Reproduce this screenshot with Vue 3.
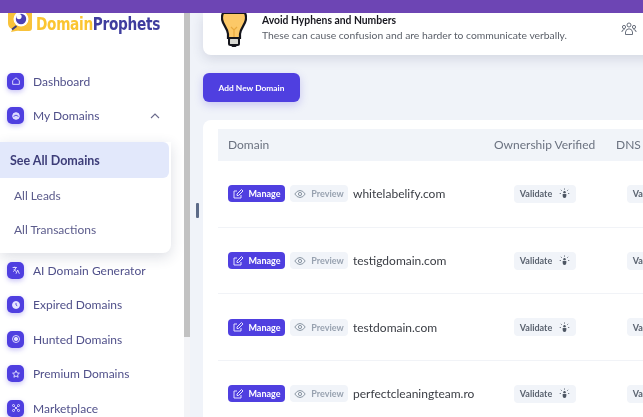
<script setup>
const topItems = [
  { label: 'Dashboard', icon: 'home' },
  { label: 'My Domains', icon: 'globe', open: true }
]

const subItems = [
  { label: 'See All Domains', active: true },
  { label: 'All Leads' },
  { label: 'All Transactions' }
]

const bottomItems = [
  { label: 'AI Domain Generator', icon: 'translate' },
  { label: 'Expired Domains', icon: 'clock' },
  { label: 'Hunted Domains', icon: 'target' },
  { label: 'Premium Domains', icon: 'star' },
  { label: 'Marketplace', icon: 'market' }
]

const domains = ['whitelabelify.com', 'testigdomain.com', 'testdomain.com', 'perfectcleaningteam.ro']
</script>

<template>
  <div class="page">
    <div class="topbar"></div>
    <div class="body">
      <aside class="sidebar">
        <div class="logo">
          <svg class="logo__mark" viewBox="0 0 24 19" width="24" height="19">
            <path d="M0 0h24v15q0 3-3 3H12q-2-.5-4 0L3 19l1.500-3Q0 15 0 10z" fill="#f8c23a" />
            <circle cx="13" cy="6" r="7.500" fill="#fff" />
            <circle cx="13" cy="6" r="5.200" fill="#4a3fb5" />
            <circle cx="11" cy="3.600" r="2.600" fill="#fff" />
            <path d="M4 16.500 8.500 13" stroke="#3c3a78" stroke-width="2" />
          </svg>
          <span class="logo__text"><span class="logo__a">Domain</span><span class="logo__b">Prophets</span></span>
        </div>

        <nav class="nav">
          <a v-for="item in topItems" :key="item.label" class="nav__item">
            <span class="nav__icon">
              <svg viewBox="0 0 12 12" width="10" height="10" fill="none" stroke="#e6e4ff" stroke-width="1.100">
                <path v-if="item.icon === 'home'" d="M2 5.500 6 2.200l4 3.300V10H2z" />
                <template v-else>
                  <circle cx="6" cy="6" r="4" fill="#d9d6ff" />
                  <path d="M3 6.500 6 5l3 1.500" stroke="#4f3fe0" />
                </template>
              </svg>
            </span>
            <span class="nav__label">{{ item.label }}</span>
            <svg v-if="item.open" class="nav__chevron" viewBox="0 0 10 6" width="10" height="6" fill="none" stroke="#6b6b8c" stroke-width="1.100">
              <path d="M1 5 5 1l4 4" />
            </svg>
          </a>
        </nav>

        <ul class="submenu">
          <li v-for="sub in subItems" :key="sub.label" class="submenu__item" :class="{ active: sub.active }">
            {{ sub.label }}
          </li>
        </ul>

        <nav class="nav">
          <a v-for="item in bottomItems" :key="item.label" class="nav__item">
            <span class="nav__icon">
              <svg viewBox="0 0 12 12" width="10" height="10" fill="none" stroke="#e6e4ff" stroke-width="1.100">
                <g v-if="item.icon === 'translate'">
                  <path d="M2 3h5M4.500 2v1M6 3Q5 6.500 2.500 8M3.500 5q1 2 3 3" />
                  <path d="M6 10.500 8 6l2 4.500" />
                </g>
                <g v-else-if="item.icon === 'clock'">
                  <circle cx="6" cy="6" r="4.200" fill="#e6e4ff" />
                  <path d="M6 3.500V6l1.500 1" stroke="#4f3fe0" />
                </g>
                <g v-else-if="item.icon === 'target'">
                  <circle cx="6" cy="6" r="4.200" />
                  <circle cx="6" cy="6" r="2" fill="#e6e4ff" />
                </g>
                <path v-else-if="item.icon === 'star'" d="m6 2 1.200 2.700 2.900.3-2.200 2 .6 2.900L6 8.400 3.500 9.900l.6-2.900-2.200-2 2.900-.3z" />
                <g v-else>
                  <circle cx="3" cy="3" r="1.200" />
                  <circle cx="9" cy="3" r="1.200" />
                  <circle cx="3" cy="9" r="1.200" />
                  <circle cx="9" cy="9" r="1.200" />
                  <path d="m4 4 4 4M8 4 4 8" />
                </g>
              </svg>
            </span>
            <span class="nav__label">{{ item.label }}</span>
          </a>
        </nav>
      </aside>

      <div class="scrolltrack"><div class="scrolltrack__thumb"></div></div>

      <main class="main">
        <span class="handle"></span>

        <section class="tip">
          <svg class="tip__bulb" viewBox="0 0 26 34" width="26" height="34">
            <path d="M2 0h22q1.500 3 .8 7c-.8 5-5.300 8-5.800 14v4H7v-4C6.500 15 2 12 1.200 7Q.500 3 2 0z" fill="#fcc867" stroke="#15151c" stroke-width="2.200" />
            <path d="M10 14l3 3 3-3M13 17v7" stroke="#e9a93d" stroke-width="1.200" fill="none" />
            <rect x="8" y="25" width="10" height="7" rx="1.500" fill="#d8d8d2" stroke="#15151c" stroke-width="2" />
            <rect x="10.500" y="31" width="5" height="3" rx="1" fill="#15151c" />
          </svg>
          <div class="tip__text">
            <strong class="tip__title">Avoid Hyphens and Numbers</strong>
            <p class="tip__desc">These can cause confusion and are harder to communicate verbally.</p>
          </div>
          <svg class="tip__people" viewBox="0 0 16 14" width="16" height="14" fill="none" stroke="#5a6270" stroke-width=".9">
            <circle cx="8" cy="3" r="2" />
            <circle cx="3" cy="5" r="1.600" />
            <circle cx="13" cy="5" r="1.600" />
            <path d="M.8 10Q1 7.500 3.500 7.500M15.200 10Q15 7.500 12.500 7.500M4.500 12.500V10Q5 6.800 8 6.800T11.500 10v2.500z" />
          </svg>
        </section>

        <button class="add-btn">Add New Domain</button>

        <section class="card">
          <div class="row row--head">
            <span>Domain</span>
            <span>Ownership Verified</span>
            <span>DNS</span>
          </div>
          <div v-for="domain in domains" :key="domain" class="row">
            <div class="cell-domain">
              <button class="manage">
                <svg viewBox="0 0 12 12" width="12" height="12" fill="none" stroke="#e4e2ff" stroke-width="1">
                  <path d="M9 7v3H2V3h3" />
                  <path d="M5 7.500V6l4.500-4.500L11 3 6.500 7.500z" />
                </svg>
                Manage
              </button>
              <button class="preview">
                <svg viewBox="0 0 12 12" width="12" height="12" fill="none" stroke="#7d8a99" stroke-width=".9">
                  <path d="M.8 6Q3 2.500 6 2.500T11.200 6Q9 9.500 6 9.500T.8 6z" />
                  <circle cx="6" cy="6" r="1.600" />
                </svg>
                Preview
              </button>
              <span class="domain">{{ domain }}</span>
            </div>
            <div v-for="col in ['ownership', 'dns']" :key="col" class="cell-validate" :class="'cell-validate--' + col">
              <button class="validate">
                Validate
                <svg viewBox="0 0 12 12" width="11" height="11" fill="#4d5663">
                  <path d="M4 6.500h4v2.300Q8 11 6 11T4 8.800z" />
                  <circle cx="6" cy="4.500" r="1.300" />
                  <path d="M6 .5v1.300M2 2l1 1M10 2 9 3M.8 6h1.300M9.900 6h1.300" stroke="#4d5663" stroke-width=".9" />
                </svg>
              </button>
            </div>
          </div>
        </section>
      </main>
    </div>
  </div>
</template>

<style>
html,
body {
  margin: 0;
  overflow: hidden;
}
</style>

<style scoped>
.page {
  width: 643px;
  height: 417px;
  overflow: hidden;
  display: flex;
  flex-direction: column;
  font-family: Lato, "Noto Sans", sans-serif;
  background: #f0f3f9;
  filter: blur(0.35px);
}

.topbar {
  height: 13px;
  flex: none;
  background: #6d45b4;
  position: relative;
  z-index: 3;
}

.body {
  display: flex;
  flex: 1;
  min-height: 0;
}

.sidebar {
  width: 184px;
  flex: none;
  background: #fff;
  position: relative;
  z-index: 1;
}

.logo {
  display: flex;
  align-items: flex-start;
  gap: 4px;
  height: 51px;
  padding-left: 8px;
}

.logo__mark {
  flex: none;
}

.logo__text {
  display: inline-block;
  font-family: "DejaVu Sans", sans-serif;
  font-size: 18px;
  font-weight: 700;
  line-height: 24px;
  margin-top: -1px;
  letter-spacing: -0.4px;
  white-space: nowrap;
  transform: scaleX(0.76);
  transform-origin: left;
}

.logo__a {
  color: #fbc531;
}

.logo__b {
  color: #3f3d9e;
}

.nav {
  display: flex;
  flex-direction: column;
}

.nav__item {
  display: flex;
  align-items: center;
  height: 34.500px;
  padding-left: 7px;
  padding-right: 24px;
  gap: 9px;
}

.nav__icon {
  width: 17px;
  height: 17px;
  border-radius: 5px;
  background: #4f3fe0;
  box-shadow: 0 2px 5px rgba(79, 63, 224, 0.3);
  display: flex;
  align-items: center;
  justify-content: center;
  flex: none;
}

.nav__label {
  font-size: 12px;
  color: #50508a;
  white-space: nowrap;
}

.nav__chevron {
  margin-left: auto;
}

.submenu {
  list-style: none;
  margin: 9px 0 0;
  padding: 0;
  width: 171px;
  height: 111px;
  background: #fff;
  border-radius: 0 0 8px 0;
  box-shadow: 0 4px 14px rgba(40, 50, 90, 0.16);
}

.submenu__item {
  height: 34.500px;
  display: flex;
  align-items: center;
  padding-left: 14px;
  font-size: 12px;
  color: #5c5c8c;
}

.submenu__item.active {
  height: 36px;
  width: 169px;
  box-sizing: border-box;
  padding-left: 10px;
  background: #e2e8fb;
  border-radius: 0 6px 6px 0;
  color: #3d3d78;
  font-size: 12.500px;
  font-weight: 700;
}

.scrolltrack {
  width: 6px;
  flex: none;
  background: #f3f4f7;
}

.scrolltrack__thumb {
  height: 324px;
  background: #c2c2c2;
}

.main {
  flex: 1;
  min-width: 0;
  padding-left: 13px;
  background: #f0f3f9;
  position: relative;
}

.handle {
  position: absolute;
  left: 6px;
  top: 190px;
  width: 3px;
  height: 15px;
  background: #5d6b88;
  border-radius: 1px;
}

.tip {
  height: 42px;
  width: 460px;
  display: flex;
  align-items: flex-start;
  background: #fff;
  border-radius: 0 0 8px 8px;
  box-shadow: 0 4px 12px rgba(40, 50, 90, 0.14);
  position: relative;
}

.tip__bulb {
  margin: 0 0 0 18px;
  flex: none;
}

.tip__text {
  margin: 0 0 0 15px;
}

.tip__title {
  display: block;
  font-size: 10.350px;
  font-weight: 700;
  line-height: 15px;
  color: #17171f;
}

.tip__desc {
  margin: 0;
  font-size: 10.350px;
  line-height: 15px;
  color: #5a5f68;
  white-space: nowrap;
}

.tip__people {
  position: absolute;
  left: 418px;
  top: 9px;
}

.add-btn {
  display: block;
  margin-top: 18px;
  width: 97px;
  height: 29px;
  border: 0;
  padding: 0;
  border-radius: 6px;
  background: #4f3fe0;
  box-shadow: 0 3px 8px rgba(79, 63, 224, 0.25);
  color: #fff;
  font-family: inherit;
  font-size: 8.400px;
  font-weight: 700;
}

.card {
  margin-top: 18px;
  width: 460px;
  padding: 9px 0 0 15px;
  background: #fff;
  border-radius: 8px 0 0 0;
}

.row {
  display: grid;
  grid-template-columns: 266px 122px 100px;
  align-items: center;
  height: 66.700px;
  box-sizing: border-box;
  padding-left: 10px;
  border-bottom: 1px solid #f1f3f7;
}

.row--head {
  height: 32px;
  padding-bottom: 2px;
  background: #f1f4f9;
  border-bottom: 0;
  font-size: 12px;
  color: #6b7280;
}

.cell-domain {
  display: flex;
  align-items: center;
}

.manage,
.preview,
.validate {
  display: inline-flex;
  align-items: center;
  border: 0;
  font-family: inherit;
  font-size: 9px;
  font-weight: 700;
  padding: 0;
}

.manage {
  width: 57px;
  height: 17px;
  justify-content: center;
  gap: 4px;
  border-radius: 4px;
  background: #4f3fe0;
  color: #fff;
}

.preview {
  width: 58px;
  height: 17px;
  margin-left: 5px;
  justify-content: center;
  gap: 5px;
  border-radius: 4px;
  background: #f1f4f9;
  color: #98a2b0;
}

.domain {
  margin-left: 5px;
  font-size: 12px;
  color: #3a3d44;
  white-space: nowrap;
}

.cell-validate {
  display: flex;
  padding-left: 20px;
}

.cell-validate--dns {
  padding-left: 11px;
}

.validate {
  width: 62px;
  height: 18px;
  flex: none;
  justify-content: center;
  gap: 7px;
  border-radius: 4px;
  background: #f1f4f9;
  color: #5b6370;
}
</style>
